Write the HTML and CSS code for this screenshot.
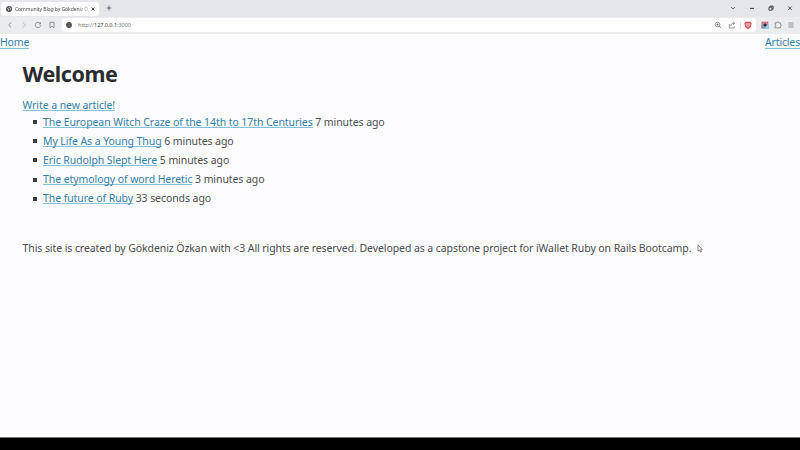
FILE: index.html
```html
<!DOCTYPE html>
<html lang="en">
<head>
<meta charset="utf-8">
<title>Community Blog by Gökdeniz Özkan</title>
<link rel="stylesheet" href="styles.css">
</head>
<body>
<header class="browser">
  <div class="tabs">
    <div class="tab">
      <svg class="globe" viewBox="0 0 8 8"><circle cx="4" cy="4" r="3" fill="#4b4e51"/><path d="M1.8 3l1.5.7.5 1.3-.8 1M4 1.5l.3 1.2 1.6.5-.7 1.2 1 .6" fill="none" stroke="#e8e9ea" stroke-width=".7"/></svg>
      <span class="tab-title">Community Blog by Gökdeniz Ö</span>
      <svg class="close" viewBox="0 0 8 8"><path d="M2.5 2.5l3 3m0-3l-3 3" stroke="#34373a" stroke-width=".9"/></svg>
    </div>
    <svg class="plus" viewBox="0 0 8 8"><path d="M4 1.5v5M1.5 4h5" stroke="#55585b" stroke-width=".8"/></svg>
    <div class="window-buttons">
      <svg viewBox="0 0 8 8"><path d="M2 3l2 2 2-2"/></svg>
      <svg viewBox="0 0 8 8"><path d="M2 4.4h4" stroke-width="1"/></svg>
      <svg viewBox="0 0 8 8"><path d="M2 3.2h3v3H2zM3.1 3V2.1h3v3h-.9" stroke-width=".9"/></svg>
      <svg viewBox="0 0 8 8"><path d="M2.1 2.3l3.8 3.8m0-3.8L2.1 6.1" stroke-width=".8"/></svg>
    </div>
  </div>
  <div class="toolbar">
    <div class="nav-icons">
      <svg viewBox="0 0 8 8"><path d="M5.2 1.5L2.6 4l2.6 2.5"/></svg>
      <svg viewBox="0 0 8 8" class="pale"><path d="M2.8 1.5L5.4 4 2.8 6.5"/></svg>
      <svg viewBox="0 0 8 8"><path d="M6.3 2.5A2.7 2.7 0 1 0 6.7 4.3M6.5 1.2v1.6H4.9"/></svg>
      <svg viewBox="0 0 8 8"><path d="M2 1.3h4v5.5L4 5.3 2 6.8z"/></svg>
    </div>
    <div class="address">
      <svg class="info" viewBox="0 0 8 8"><circle cx="4" cy="4" r="2.9" fill="#4c4f52" stroke="none"/><path d="M4 3.7v1.6M4 2.3v.6" stroke="#999" stroke-width=".6"/></svg>
      <span class="url">http://<b>127.0.0.1</b>:3000</span>
      <svg class="zoom" viewBox="0 0 8 8"><circle cx="3.5" cy="3.5" r="2.3"/><path d="M5.2 5.2l2 2M2.4 3.5h2.2M3.5 2.4v2.2"/></svg>
      <svg class="share" viewBox="0 0 8 8"><path d="M1.3 3v4h5V5.4M2.8 5c0-2 1-2.7 3.6-2.7M5.1.9l1.7 1.4-1.7 1.4"/></svg>
      <span class="divider"></span>
      <svg class="shield" viewBox="0 0 8 9"><path d="M1.6.8h4.8l1.2 1.3-.7 4L4 8.4 1.1 6.1.4 2.1z" fill="#d9555a" stroke="none"/><path d="M1.8 2.7l1.3.2.9-.4.9.4 1.3-.2L5.2 5 4 6.4 2.8 5z" fill="#e58b8d" stroke="#fbe6e6" stroke-width=".5"/></svg>
    </div>
    <div class="extensions">
      <svg viewBox="0 0 8 8"><path d="M.5.6h6.9v6.8H.5z" fill="#d66a7e" stroke="none"/><path d="M4 4h4v4H4z" fill="#8ccce7" stroke="none"/><path d="M.5 4h3v3.4h-3z" fill="#8388b5" stroke="none"/><circle cx="4" cy="4" r="2.3" fill="#d5d9ea" stroke="none"/><circle cx="4" cy="4" r="1.8" fill="#252b4b" stroke="none"/></svg>
      <svg viewBox="0 0 8 8"><path d="M1 1.8h1.8c0-1.4 2-1.4 2 0h1.6v1.6c1.3 0 1.3 1.8 0 1.8v1.7H1V5c1.1 0 1.1-1.5 0-1.5z"/></svg>
      <svg viewBox="0 0 8 8"><path d="M1.3 2h5.4M1.3 4h5.4M1.3 6h5.4"/></svg>
    </div>
  </div>
</header>
<main class="page">
  <nav class="site-nav"><a class="home">Home</a><a class="articles">Articles</a></nav>
  <div class="content">
    <h1>Welcome</h1>
    <div class="write"><a>Write a new article!</a></div>
    <ul>
      <li><a>The European Witch Craze of the 14th to 17th Centuries</a> 7 minutes ago</li>
      <li><a>My Life As a Young Thug</a> 6 minutes ago</li>
      <li><a>Eric Rudolph Slept Here</a> 5 minutes ago</li>
      <li><a>The etymology of word Heretic</a> 3 minutes ago</li>
      <li><a>The future of Ruby</a> 33 seconds ago</li>
    </ul>
    <footer>This site is created by Gökdeniz Özkan with &lt;3 All rights are reserved. Developed as a capstone project for iWallet Ruby on Rails Bootcamp.</footer>
  </div>
</main>
<div class="bottom"></div>
<svg class="pointer" viewBox="0 0 6 9"><path d="M1 .8v6.5l1.5-1.3 1 2.2 1-.5-1-2h1.8z" fill="#fff" stroke="#55575c" stroke-width=".7"/></svg>
</body>
</html>
```
FILE: styles.css
```css
* { box-sizing: border-box; }
body {
  margin: 0;
  width: 800px;
  height: 450px;
  overflow: hidden;
  display: flex;
  flex-direction: column;
  background: #fdfcfe;
  color: #4b4e51;
  font: 10.5px/19.2px "Noto Sans", "Open Sans", sans-serif;
  letter-spacing: -0.08px;
}
svg { display: block; flex: none; }
.browser { height: 34px; background: #ebecee; flex: none; letter-spacing: 0; }
.tabs { height: 17px; display: flex; align-items: center; background: #e5e6ea; padding-bottom: 1px; }
.tab {
  width: 98px;
  height: 14px;
  margin: 1px 0 0 1px;
  display: flex;
  align-items: center;
  background: #fdfdfe;
  border-radius: 3px;
}
.globe { width: 8px; height: 8px; margin-left: 4px; }
.tab-title {
  width: 74px;
  margin-left: 2px;
  white-space: nowrap;
  font-size: 5.1px;
  letter-spacing: -0.1px;
  line-height: 10px;
  -webkit-mask-image: linear-gradient(to right, #000 85%, transparent 105%);
  mask-image: linear-gradient(to right, #000 85%, transparent 105%);
}
.close { width: 8px; height: 8px; }
.plus { width: 8px; height: 8px; margin-left: 6px; }
.window-buttons { display: flex; gap: 11px; margin-left: auto; margin-right: 6px; }
.window-buttons svg { width: 8px; height: 8px; fill: none; stroke: #34373a; stroke-width: .7; }
.toolbar { height: 17px; display: flex; align-items: center; padding-bottom: 1px; }
.nav-icons { width: 62px; display: flex; gap: 6.2px; padding-left: 5.5px; flex: none; }
.toolbar svg { width: 8px; height: 8px; fill: none; stroke: #6d7073; stroke-width: .7; }
.toolbar .pale { stroke: #aaadb0; }
.address {
  width: 694px;
  height: 14px;
  display: flex;
  align-items: center;
  background: #fefefe;
  border-radius: 3px;
}
.address .info { margin-left: 3px; }
.url { margin-left: 5px; font-size: 5.6px; letter-spacing: -0.08px; line-height: 10px; color: #7b7e81; }
.url b { font-weight: 400; color: #3b3e41; }
.address .zoom { margin-left: auto; }
.address .share { margin-left: 6px; }
.divider { width: 1px; height: 7px; margin: 0 3px 0 4px; background: #dddee1; }
.toolbar .shield { width: 8px; height: 9px; margin-right: 4px; }
.extensions { display: flex; gap: 5px; margin-left: 5px; }
.page { flex: 1; min-height: 0; }
a { color: #347fa9; border-bottom: 1px solid #86bfdc; line-height: 12px; display: inline-block; height: 12px; }
.site-nav { display: flex; justify-content: space-between; height: 22px; padding-top: 2.5px; }
.site-nav a { letter-spacing: -0.16px; line-height: 11px; }
.content { padding-left: 22.5px; }
h1 { margin: 2px 0 0; height: 41px; font-size: 21.5px; letter-spacing: -0.45px; line-height: 32px; font-weight: 700; color: #292c2f; }
.write { height: 13.6px; line-height: 12px; padding-top: .2px; }
ul { margin: 0; padding: 0 0 0 20.5px; list-style: none; }
li { height: 19.2px; white-space: nowrap; position: relative; }
li::before { content: ""; position: absolute; left: -10px; top: 7.5px; width: 4px; height: 4px; background: #3b3d40; }
footer { margin-top: 30px; white-space: nowrap; }
.bottom { height: 13px; flex: none; background: #000; border-top: 1px solid #77787a; }
.pointer { position: absolute; left: 697px; top: 244px; width: 6px; height: 9px; }
```
